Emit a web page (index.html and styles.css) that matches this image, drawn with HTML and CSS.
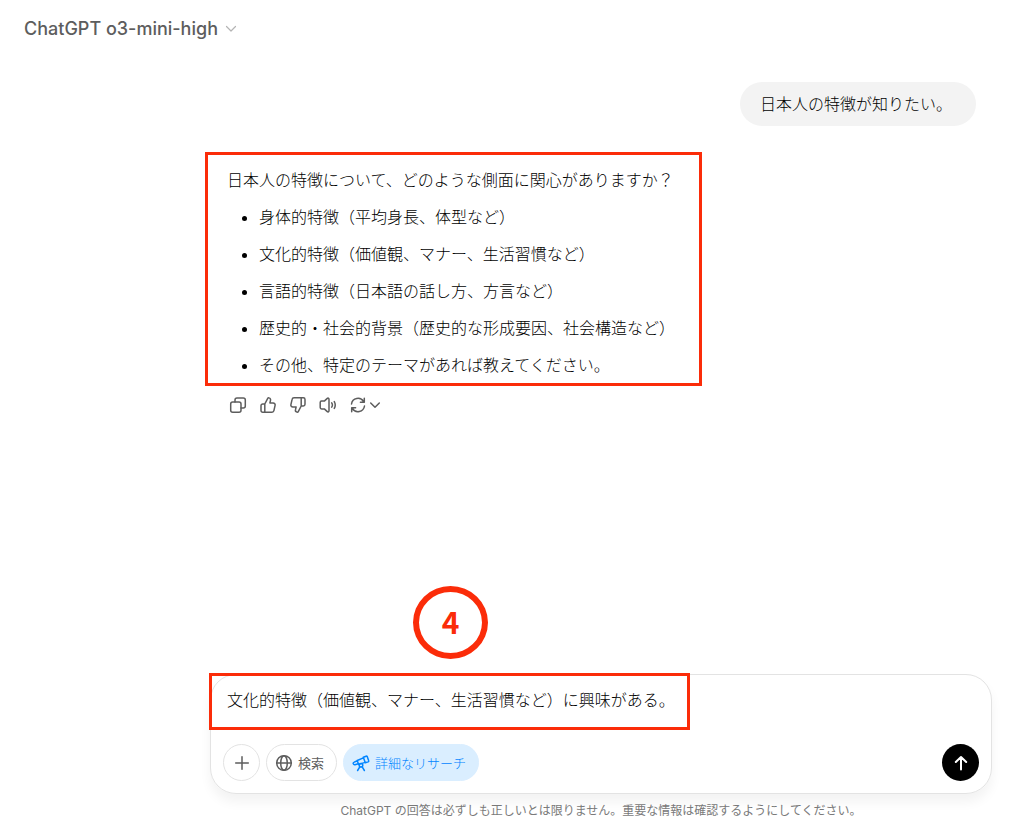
FILE: index.html
```
<!DOCTYPE html>
<html lang="ja">
<head>
  <meta charset="UTF-8">
  <meta name="viewport" content="width=device-width, initial-scale=1.0">
  <title>ChatGPT</title>
  <link rel="stylesheet" href="styles.css">
</head>
<body>
  <header class="topbar">
    <button class="model-btn" type="button">
      ChatGPT o3-mini-high
      <svg width="12" height="12" viewBox="0 0 12 12"><path d="M1.500 3.500 6 8l4.500-4.500"/></svg>
    </button>
  </header>

  <main class="thread">
    <p class="user-message">日本人の特徴が知りたい。</p>

    <article class="answer">
      <p>日本人の特徴について、どのような側面に関心がありますか？</p>
      <ul>
        <li>身体的特徴（平均身長、体型など）</li>
        <li>文化的特徴（価値観、マナー、生活習慣など）</li>
        <li>言語的特徴（日本語の話し方、方言など）</li>
        <li>歴史的・社会的背景（歴史的な形成要因、社会構造など）</li>
        <li>その他、特定のテーマがあれば教えてください。</li>
      </ul>
    </article>

    <div class="actions">
      <button type="button" aria-label="コピーする">
        <svg width="18" height="18" viewBox="0 0 18 18"><rect x="1.700" y="6" width="10.300" height="10.300" rx="2"/><path d="M6 6V4a2 2 0 0 1 2-2h6.300a2 2 0 0 1 2 2v6a2 2 0 0 1-2 2H12"/></svg>
      </button>
      <button type="button" aria-label="よい回答です">
        <svg width="18" height="18" viewBox="0 0 18 18"><path d="M5.800 8 8.600 2.600c.3-.6.900-.9 1.500-.7 1.100.3 1.700 1.300 1.400 2.400L10.900 7h3.300c1.300 0 2.200 1.200 1.900 2.400l-1.200 5.200a2 2 0 0 1-1.900 1.600H3.700a1.700 1.700 0 0 1-1.700-1.700V9.700A1.700 1.700 0 0 1 3.700 8zM5.800 8v8.200"/></svg>
      </button>
      <button type="button" aria-label="よくない回答です">
        <svg width="18" height="18" viewBox="0 0 18 18"><path d="M12.200 10l-2.800 5.400c-.3.6-.9.9-1.500.7-1.100-.3-1.700-1.300-1.400-2.400L7.100 11H3.800c-1.300 0-2.200-1.200-1.900-2.400l1.200-5.200A2 2 0 0 1 5 1.800h9.300A1.700 1.700 0 0 1 16 3.500v4.800a1.700 1.700 0 0 1-1.700 1.700zM12.200 10V1.800"/></svg>
      </button>
      <button type="button" aria-label="読み上げる">
        <svg width="18" height="18" viewBox="0 0 18 18"><path d="M10 3.200v11.600c0 .9-1 1.400-1.700.8l-3-2.700H2.600c-.8 0-1.400-.6-1.400-1.400v-5c0-.8.6-1.400 1.400-1.400h2.700l3-2.700c.7-.6 1.700-.1 1.700.8zM12.700 6.800a4 4 0 0 1 0 4.400M15.300 5.600a7 7 0 0 1 0 6.800"/></svg>
      </button>
      <button type="button" aria-label="モデルを切り替える" class="switch">
        <svg width="18" height="18" viewBox="0 0 18 18"><path d="M2.500 8A6.500 6.500 0 0 1 14.600 5.700M15.300 2.300v3.900h-3.900M15.500 10A6.500 6.500 0 0 1 3.400 12.300M2.700 15.700v-3.900h3.900"/></svg>
        <svg width="12" height="12" viewBox="0 0 12 12"><path d="M1.700 4 6 8.200 10.300 4"/></svg>
      </button>
    </div>
  </main>

  <footer class="bottom">
    <form class="composer">
      <textarea rows="1" aria-label="メッセージ">文化的特徴（価値観、マナー、生活習慣など）に興味がある。</textarea>
      <div class="tools">
        <button class="pill round" type="button" aria-label="追加">
          <svg width="18" height="18" viewBox="0 0 18 18"><path d="M9 2.700v12.600M2.700 9h12.600"/></svg>
        </button>
        <button class="pill" type="button">
          <svg width="18" height="18" viewBox="0 0 18 18"><circle cx="9" cy="9" r="7.300"/><ellipse cx="9" cy="9" rx="3.300" ry="7.300"/><path d="M1.700 9h14.600"/></svg>
          検索
        </button>
        <button class="pill active" type="button">
          <svg width="18" height="18" viewBox="0 0 18 18"><path d="M11.300 3.300 14.100 2.200c.5-.2 1 0 1.200.5l1.400 4c.2.500-.1 1-.6 1.200l-2.800.9zM11.400 3.900 5.200 6.500l1.400 3.900 6.600-2M5.300 6.700 2.200 8.100c-.8.300-1.100 1-.9 1.700.3.800 1 1.100 1.700.9l3.400-1"/><circle cx="9" cy="11.300" r="1.800"/><path d="M7.800 12.800 5.600 16.500M10.200 12.800l2.200 3.700"/></svg>
          詳細なリサーチ
        </button>
        <button class="send" type="submit" aria-label="送信">
          <svg width="18" height="18" viewBox="0 0 18 18"><path d="M9 15.500V3M3.800 8 9 3l5.200 5"/></svg>
        </button>
      </div>
      <span class="mark-box"></span>
      <span class="mark-step">4</span>
    </form>
    <p class="note">ChatGPT の回答は必ずしも正しいとは限りません。重要な情報は確認するようにしてください。</p>
  </footer>
</body>
</html>
```
FILE: styles.css
```
* {
  margin: 0;
  padding: 0;
  box-sizing: border-box;
}
body {
  display: flex;
  flex-direction: column;
  min-height: 100vh;
  background: #fff;
  color: #000;
  font-family: Inter, "Noto Sans CJK JP", sans-serif;
  font-size: 16px;
  font-weight: 300;
  line-height: 28px;
}
button {
  display: flex;
  align-items: center;
  border: none;
  background: none;
  color: #5d5d5d;
  font: inherit;
  cursor: pointer;
}
svg {
  flex: none;
  fill: none;
  stroke: currentColor;
  stroke-width: 1.5;
  stroke-linecap: round;
  stroke-linejoin: round;
}
.topbar {
  padding: 15px 24px;
}
.model-btn {
  gap: 7px;
  font-size: 18px;
  font-weight: 500;
}
.model-btn svg {
  color: #b4b4b4;
  stroke-width: 1.2;
}

/* conversation */
.thread {
  display: flex;
  flex-direction: column;
  flex: 1;
  padding: 24px 48px 24px 205px;
}
.user-message {
  align-self: flex-end;
  padding: 8px 24px 8px 20px;
  border-radius: 22px;
  background: #f3f3f3;
}
.answer {
  align-self: flex-start;
  margin-top: 26px;
  padding: 11px 24px 4px 19px;
  border: 3px solid #fb2c09;
}
.answer ul {
  padding-left: 32px;
}
.answer li {
  margin-top: 9px;
}
.actions {
  display: flex;
  gap: 12px;
  padding: 10px 0 0 24px;
}
.switch {
  gap: 2px;
}

/* message box */
.bottom {
  padding: 0 32px 7px 210px;
}
.composer {
  position: relative;
  padding: 11px 12px 12px;
  border: 1px solid #e3e3e3;
  border-radius: 26px;
  box-shadow: 0 8px 12px rgba(0, 0, 0, 0.05);
}
.composer textarea {
  display: block;
  width: 100%;
  height: 47px;
  padding: 0 4px;
  border: none;
  outline: none;
  resize: none;
  background: none;
  color: inherit;
  font: inherit;
}
.tools {
  display: flex;
  align-items: center;
  gap: 6px;
  padding-top: 11px;
}
.pill {
  gap: 5px;
  height: 37px;
  padding: 0 12px 0 8px;
  border: 1px solid #e3e3e3;
  border-radius: 19px;
  font-size: 13px;
  font-weight: 400;
}
.round {
  justify-content: center;
  width: 37px;
  padding: 0;
}
.active {
  border-color: #daeeff;
  background: #daeeff;
  color: #0285ff;
  font-weight: 300;
}
.send {
  justify-content: center;
  width: 37px;
  height: 37px;
  margin-left: auto;
  border-radius: 50%;
  background: #000;
  color: #fff;
}
.send svg {
  stroke-width: 2;
}
.note {
  margin-top: 8px;
  color: #7a7a7a;
  font-size: 12px;
  font-weight: 400;
  line-height: 18px;
  text-align: center;
}

/* red callouts */
.mark-box {
  position: absolute;
  top: -2px;
  left: -2px;
  width: 481px;
  height: 57px;
  border: 3px solid #fb2c09;
  pointer-events: none;
}
.mark-step {
  position: absolute;
  top: -89px;
  left: 202px;
  display: flex;
  align-items: center;
  justify-content: center;
  width: 75px;
  height: 73px;
  padding-bottom: 4px;
  border: 6px solid #fb2c09;
  border-radius: 50%;
  color: #fb2c09;
  font-family: "Noto Sans CJK JP", sans-serif;
  font-size: 30px;
  font-weight: 700;
}
```
